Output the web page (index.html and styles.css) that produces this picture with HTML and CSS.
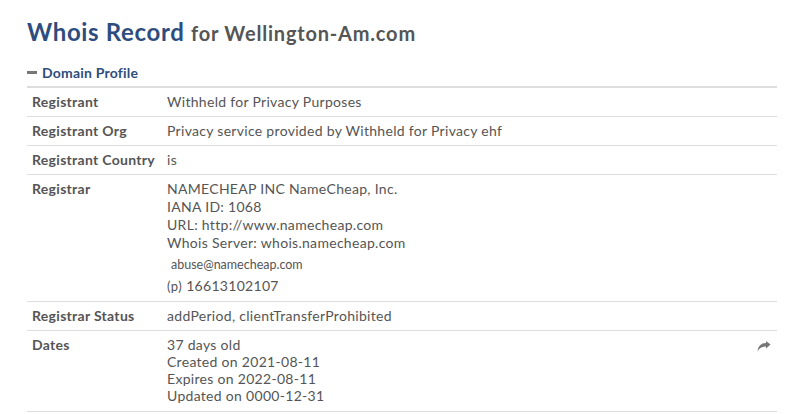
FILE: index.html
```html
<!DOCTYPE html>
<html>
<head>
<meta charset="utf-8">
<link rel="stylesheet" href="styles.css">
</head>
<body>
<div class="page">
  <h1 class="title"><span class="main">Whois Record</span> <small class="sub">for Wellington-Am.com</small></h1>
  <div class="section-head"><span class="minus"></span><span class="section-title">Domain Profile</span></div>
  <table class="profile">
    <tr><th>Registrant</th><td>Withheld for Privacy Purposes</td></tr>
    <tr><th>Registrant Org</th><td>Privacy service provided by Withheld for Privacy ehf</td></tr>
    <tr><th>Registrant Country</th><td>is</td></tr>
    <tr><th>Registrar</th><td>
      <div class="line">NAMECHEAP INC NameCheap, Inc.</div>
      <div class="line">IANA ID: 1068</div>
      <div class="line">URL: http://www.namecheap.com</div>
      <div class="line">Whois Server: whois.namecheap.com</div>
      <div class="abuse">abuse@namecheap.com</div>
      <div class="phone"><span class="p">(p)</span> 16613102107</div>
    </td></tr>
    <tr><th>Registrar Status</th><td>addPeriod, clientTransferProhibited</td></tr>
    <tr><th>Dates</th><td class="dates">
      <div class="share"><svg width="14" height="12" viewBox="0 0 14 12"><path d="M13.6 3.6 L9 0 V2 C4 2 1 5 0.6 10.4 C2.2 7 4.8 5.6 9 5.6 V7.6 Z" fill="#777"/></svg></div>
      <div class="dline">37 days old</div>
      <div class="dline">Created on 2021-08-11</div>
      <div class="dline">Expires on 2022-08-11</div>
      <div class="dline">Updated on 0000-12-31</div>
    </td></tr>
  </table>
</div>
</body>
</html>
```

FILE: styles.css
```css
html, body { margin: 0; padding: 0; background: #fff; }
body { font-family: Lato, "Open Sans", sans-serif; color: #555; }
.page { padding: 16px 21px 0 27px; }
.title { margin: 0; font-size: 24px; font-weight: 700; line-height: 32px; color: #2e4d7e; letter-spacing: 0.65px; }
.title .sub { font-size: 20px; color: #555; font-weight: 700; letter-spacing: 0.8px; }
.section-head { display: flex; align-items: center; margin-top: 15px; height: 16px; }
.minus { display: inline-block; width: 10px; height: 3px; background: #777; margin-right: 5px; }
.section-title { font-size: 14px; font-weight: 700; color: #2e4d7e; letter-spacing: 0.2px; }
.profile { width: 750px; border-collapse: collapse; margin-top: 6px; border-top: 2px solid #ddd; font-size: 14px; }
.profile th, .profile td { border-bottom: 1px solid #ddd; padding: 5px 5px 5px; vertical-align: top; text-align: left; line-height: 18px; letter-spacing: 0.3px; }
.profile th { width: 125px; font-weight: 700; color: #555; }
.profile td { font-weight: 400; color: #555; }
.line { line-height: 18px; }
.abuse { font-size: 12.5px; line-height: 22px; padding-top: 2px; padding-left: 4px; letter-spacing: 0; }
.phone { line-height: 19px; }
.phone .p { font-size: 13px; letter-spacing: 0.5px; }
.dates { position: relative; }
.profile td.dates { padding-top: 5px; padding-bottom: 7px; }
.dline { line-height: 17px; }
.share { position: absolute; right: 6px; top: 8px; }
```
